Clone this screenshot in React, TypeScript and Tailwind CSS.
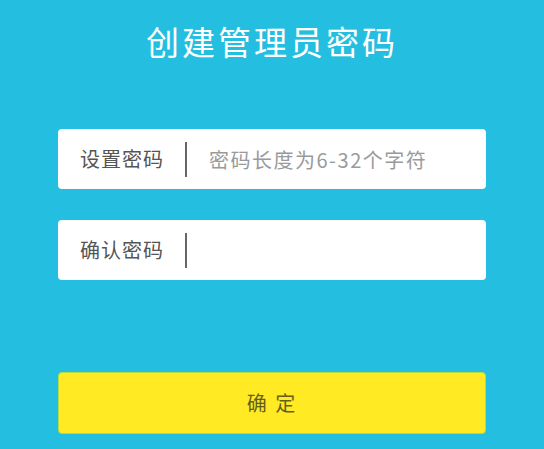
import React from 'react'

const font = { fontFamily: '"Noto Sans CJK SC", "Noto Sans", sans-serif' }

function Field({ label, placeholder }: { label: string; placeholder?: string }) {
  return (
    <div className="flex h-[60px] items-center rounded-[4px] bg-white pl-[22px]">
      <span className="w-[84px] text-[20px] leading-none tracking-[1px] text-[#555]">{label}</span>
      <span className="ml-[21px] h-[35px] w-[2px] bg-[#666]" />
      <input
        placeholder={placeholder}
        className="ml-[22px] h-full min-w-0 flex-1 bg-transparent text-[20px] tracking-[1.5px] text-[#555] outline-none placeholder:text-[#9a9a9a]"
        style={font}
        type="password"
      />
    </div>
  )
}

export default function App() {
  return (
    <div className="h-[449px] w-full overflow-hidden bg-[#24bfe0]" style={font}>
      <h1 className="pt-[21px] text-center text-[33px] leading-[40px] tracking-[3px] text-white">创建管理员密码</h1>
      <div className="mt-[68px] flex flex-col px-[58px]">
        <Field label="设置密码" placeholder="密码长度为6-32个字符" />
        <div className="mt-[31px]">
          <Field label="确认密码" />
        </div>
        <button className="mt-[92px] h-[62px] rounded-[4px] border border-[#b9da3f] bg-[#ffea24] text-[20px] tracking-[2px] text-[#655f1c]">
          确 定
        </button>
      </div>
    </div>
  )
}
